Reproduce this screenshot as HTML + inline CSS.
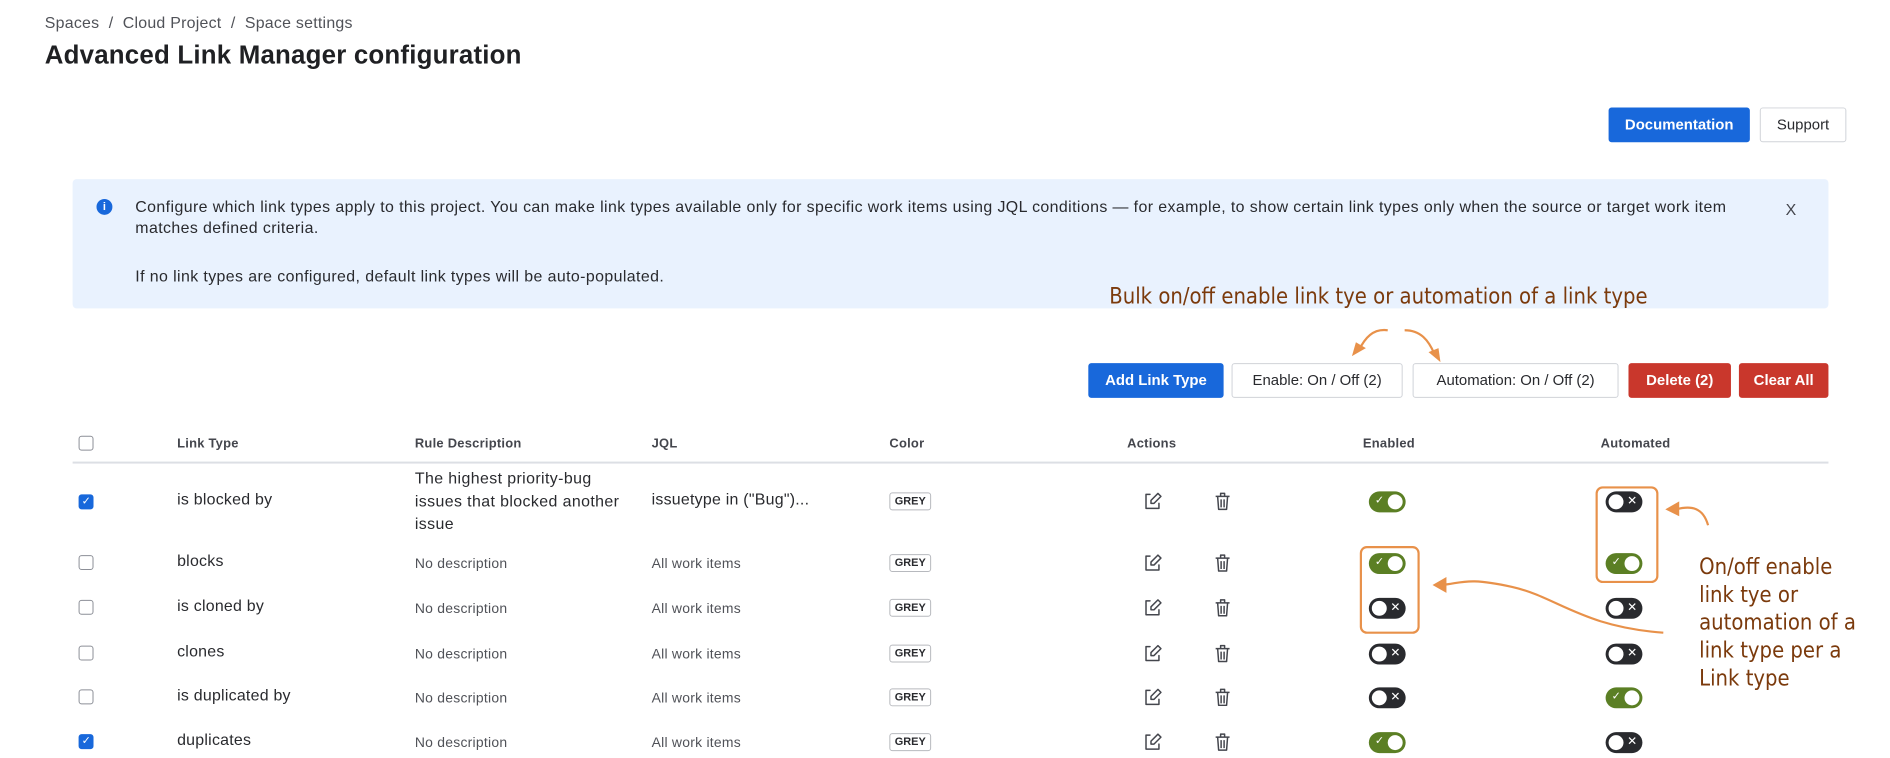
<!DOCTYPE html>
<html><head><meta charset="utf-8"><style>
*{box-sizing:border-box;margin:0;padding:0}
body{width:1890px;height:758px;background:#fff;font-family:"Liberation Sans",sans-serif;color:#292a2e;position:relative;overflow:hidden}
#w{position:absolute;left:0;top:0;width:1900px;height:762px;transform:scale(0.9948);transform-origin:0 0;letter-spacing:0.25px}
.a{position:absolute;white-space:nowrap}
.btn{position:absolute;height:35px;border-radius:3px;font-size:15px;display:flex;align-items:center;justify-content:center;border:1px solid #d0d3d8;background:#fff;color:#292a2e;letter-spacing:0}
.blue{background:#1868db;border-color:#1868db;color:#fff;font-weight:bold}
.red{background:#c9372c;border-color:#c9372c;color:#fff;font-weight:bold}
.th{position:absolute;top:438px;font-size:13px;font-weight:bold;color:#44464d}
.cb{position:absolute;left:79px;width:15px;height:15px;border:1.5px solid #8c8f97;border-radius:3px;background:#fff}
.cb.on{background:#1868db;border-color:#1868db}
.cb.on:after{content:"✓";color:#fff;font-size:11px;position:absolute;left:2px;top:-1px}
.lt{position:absolute;left:178px;font-size:16px;color:#292a2e}
.sm{position:absolute;font-size:14px;color:#505258}
.badge{position:absolute;left:894px;width:42px;height:18px;border:1px solid #b7b9be;border-radius:3px;font-size:11px;font-weight:bold;color:#292a2e;display:flex;align-items:center;justify-content:center;letter-spacing:0}
.tg{position:absolute;width:37px;height:21px;border-radius:11px}
.tg.on{background:#5b7f24}
.tg.off{background:#292a2e}
.tg:before{content:"";position:absolute;top:3px;width:15px;height:15px;border-radius:50%;background:#fff}
.tg.on:before{right:3px}
.tg.off:before{left:3px}
.tg.on:after{content:"✓";position:absolute;left:6px;top:2px;color:#fff;font-size:11px}
.tg.off:after{content:"✕";position:absolute;right:5px;top:2px;color:#fff;font-size:12px}
.ann{position:absolute;font-family:"Liberation Sans Narrow","DejaVu Sans Condensed","Liberation Sans",sans-serif;color:#7b3a0c;font-size:22px;white-space:nowrap;letter-spacing:0}
</style></head><body><div id="w">
<div class="a" style="left:45px;top:15px;font-size:16px;color:#505258">Spaces &nbsp;/ &nbsp;Cloud Project &nbsp;/ &nbsp;Space settings</div>
<div class="a" style="left:45px;top:40px;font-size:26px;font-weight:bold;color:#1f2023;letter-spacing:0.2px">Advanced Link Manager configuration</div>
<div class="btn blue" style="left:1617px;top:108px;width:142px">Documentation</div>
<div class="btn" style="left:1769px;top:108px;width:87px">Support</div>

<div class="a" style="left:73px;top:180px;width:1765px;height:130px;background:#e9f2fe;border-radius:4px"></div>
<div class="a" style="left:97px;top:200px;width:16px;height:16px;border-radius:50%;background:#1868db;color:#fff;font-size:11px;font-weight:bold;text-align:center;line-height:16px;letter-spacing:0">i</div>
<div class="a" style="left:136px;top:198px;font-size:16px;line-height:21px;color:#292a2e;letter-spacing:0.4px">Configure which link types apply to this project. You can make link types available only for specific work items using JQL conditions — for example, to show certain link types only when the source or target work item<br>matches defined criteria.</div>
<div class="a" style="left:136px;top:270px;font-size:16px;color:#292a2e;letter-spacing:0.4px">If no link types are configured, default link types will be auto-populated.</div>
<div class="a" style="left:1795px;top:203px;font-size:16px;color:#44464d">X</div>

<div class="ann" style="left:1115px;top:286px">Bulk on/off enable link tye or automation of a link type</div>

<div class="btn blue" style="left:1094px;top:365px;width:136px">Add Link Type</div>
<div class="btn" style="left:1238px;top:365px;width:172px">Enable: On / Off (2)</div>
<div class="btn" style="left:1420px;top:365px;width:207px">Automation: On / Off (2)</div>
<div class="btn red" style="left:1637px;top:365px;width:103px">Delete (2)</div>
<div class="btn red" style="left:1748px;top:365px;width:90px">Clear All</div>

<div class="cb" style="top:438px"></div>
<div class="th" style="left:178px">Link Type</div>
<div class="th" style="left:417px">Rule Description</div>
<div class="th" style="left:655px">JQL</div>
<div class="th" style="left:894px">Color</div>
<div class="th" style="left:1133px">Actions</div>
<div class="th" style="left:1370px">Enabled</div>
<div class="th" style="left:1609px">Automated</div>
<div class="a" style="left:73px;top:464px;width:1765px;height:2px;background:#dcdfe4"></div>

<div class="cb on" style="top:497px"></div>
<div class="lt" style="top:494px">is blocked by</div>
<div class="a" style="left:417px;top:470px;font-size:16px;line-height:23px;color:#292a2e;letter-spacing:0.4px">The highest priority-bug<br>issues that blocked another<br>issue</div>
<div class="a" style="left:655px;top:494px;font-size:16px;color:#292a2e">issuetype in ("Bug")...</div>
<div class="badge" style="top:495px">GREY</div>

<div class="cb" style="top:558px"></div><div class="lt" style="top:556px">blocks</div>
<div class="sm" style="left:417px;top:558px">No description</div><div class="sm" style="left:655px;top:558px">All work items</div>
<div class="badge" style="top:557px">GREY</div>

<div class="cb" style="top:603px"></div><div class="lt" style="top:601px">is cloned by</div>
<div class="sm" style="left:417px;top:603px">No description</div><div class="sm" style="left:655px;top:603px">All work items</div>
<div class="badge" style="top:602px">GREY</div>

<div class="cb" style="top:649px"></div><div class="lt" style="top:647px">clones</div>
<div class="sm" style="left:417px;top:649px">No description</div><div class="sm" style="left:655px;top:649px">All work items</div>
<div class="badge" style="top:648px">GREY</div>

<div class="cb" style="top:693px"></div><div class="lt" style="top:691px">is duplicated by</div>
<div class="sm" style="left:417px;top:693px">No description</div><div class="sm" style="left:655px;top:693px">All work items</div>
<div class="badge" style="top:692px">GREY</div>

<div class="cb on" style="top:738px"></div><div class="lt" style="top:736px">duplicates</div>
<div class="sm" style="left:417px;top:738px">No description</div><div class="sm" style="left:655px;top:738px">All work items</div>
<div class="badge" style="top:737px">GREY</div>

<svg class="a" style="left:0;top:0" width="1900" height="762">
<defs>
<g id="ed" fill="none" stroke="#44464d" stroke-width="1.5" stroke-linecap="round" stroke-linejoin="round"><path d="M6 2H2v14h13v-5"/><path d="M14 1l3 3-7 7H7V8z"/></g>
<g id="tr" fill="none" stroke="#44464d" stroke-width="1.5" stroke-linejoin="round"><path d="M1 4h14M6 4V1h4v3M3 4l1 13h8l1-13M6.5 7v8M9.5 7v8"/></g>
</defs>
<use href="#ed" x="1150" y="495"/><use href="#tr" x="1221" y="495"/>
<use href="#ed" x="1150" y="557"/><use href="#tr" x="1221" y="557"/>
<use href="#ed" x="1150" y="602"/><use href="#tr" x="1221" y="602"/>
<use href="#ed" x="1150" y="648"/><use href="#tr" x="1221" y="648"/>
<use href="#ed" x="1150" y="692"/><use href="#tr" x="1221" y="692"/>
<use href="#ed" x="1150" y="737"/><use href="#tr" x="1221" y="737"/>
<g fill="none" stroke="#e8914a" stroke-width="2.2">
<rect x="1368" y="550" width="58" height="86" rx="6"/>
<rect x="1605" y="490" width="61" height="95" rx="6"/>
<path d="M1672 636C1590 630 1565 600 1520 590S1470 586 1450 588"/>
<path d="M1717 528C1712 510 1700 508 1685 512"/>
<path d="M1395 332C1380 330 1372 340 1366 352"/>
<path d="M1412 332C1428 332 1436 342 1442 356"/>
</g>
<g fill="#e8914a">
<path d="M1440 588l14-8v16z"/>
<path d="M1674 512l14-8v15z"/>
<path d="M1359 358l4-14 10 6z"/>
<path d="M1448 364l-12-10 10-4z"/>
</g>
</svg>

<div class="tg on" style="left:1376px;top:494px"></div>
<div class="tg off" style="left:1614px;top:494px"></div>
<div class="tg on" style="left:1376px;top:556px"></div>
<div class="tg on" style="left:1614px;top:556px"></div>
<div class="tg off" style="left:1376px;top:601px"></div>
<div class="tg off" style="left:1614px;top:601px"></div>
<div class="tg off" style="left:1376px;top:647px"></div>
<div class="tg off" style="left:1614px;top:647px"></div>
<div class="tg off" style="left:1376px;top:691px"></div>
<div class="tg on" style="left:1614px;top:691px"></div>
<div class="tg on" style="left:1376px;top:736px"></div>
<div class="tg off" style="left:1614px;top:736px"></div>

<div class="ann" style="left:1708px;top:557px;line-height:28px">On/off enable<br>link tye or<br>automation of a<br>link type per a<br>Link type</div>
</div></body></html>
